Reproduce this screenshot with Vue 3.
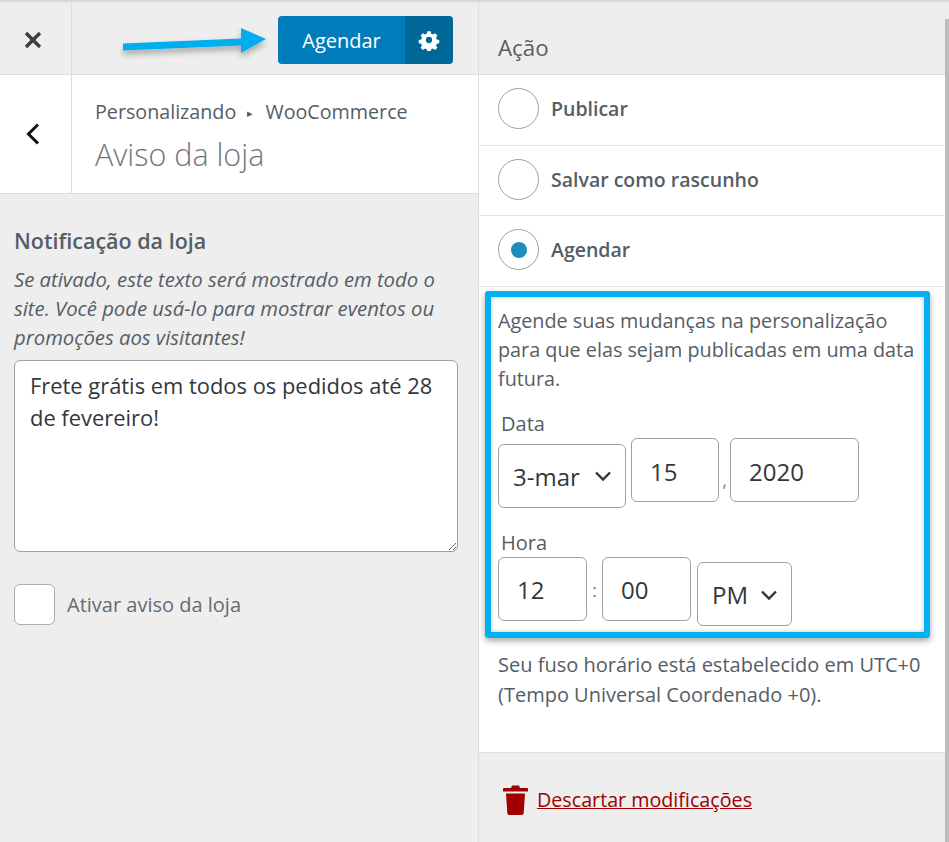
<script setup>
const actions = [
  { label: 'Publicar', checked: false },
  { label: 'Salvar como rascunho', checked: false },
  { label: 'Agendar', checked: true },
]
</script>

<template>
  <div class="page">
    <section class="left">
      <header class="topbar">
        <div class="close">
          <svg width="18" height="18" viewBox="0 0 18 18"><path d="M2 2 16 16M16 2 2 16" stroke="#3a3f45" stroke-width="3.4" fill="none"/></svg>
        </div>
        <div class="publish">
          <span class="publish-main">Agendar</span>
          <span class="publish-gear">
            <svg width="22" height="22" viewBox="0 0 24 24"><path fill="#fff" fill-rule="evenodd" d="M10 1.500h4l.6 3a8 8 0 0 1 2.200.9l2.600-1.700 2.800 2.800-1.700 2.600c.4.7.7 1.400.9 2.200l3 .6v4l-3 .6a8 8 0 0 1-.9 2.200l1.700 2.600-2.800 2.800-2.600-1.700a8 8 0 0 1-2.200.9l-.6 3h-4l-.6-3a8 8 0 0 1-2.200-.9l-2.600 1.700-2.800-2.800 1.700-2.600a8 8 0 0 1-.9-2.200l-3-.6v-4l3-.6c.2-.8.5-1.500.9-2.200L1.800 6.500l2.800-2.800 2.600 1.700a8 8 0 0 1 2.200-.9zM12 8.200a3.800 3.800 0 1 0 0 7.600 3.800 3.800 0 0 0 0-7.600z" transform="translate(1.200 1.200) scale(.9)"/></svg>
          </span>
        </div>
      </header>

      <div class="crumbs">
        <div class="back">
          <svg width="16" height="24" viewBox="0 0 16 24"><path d="M13 2.500 3.500 12 13 21.500" stroke="#111" stroke-width="3" fill="none"/></svg>
        </div>
        <div class="crumb-text">
          <div class="crumb-path">Personalizando <span class="crumb-sep">▸</span> WooCommerce</div>
          <div class="crumb-title">Aviso da loja</div>
        </div>
      </div>

      <div class="form">
        <h3 class="form-title">Notificação da loja</h3>
        <p class="form-help">Se ativado, este texto será mostrado em todo o site. Você pode usá-lo para mostrar eventos ou promoções aos visitantes!</p>
        <textarea class="notice" readonly>Frete grátis em todos os pedidos até 28 de fevereiro!</textarea>
        <label class="check">
          <span class="check-box"></span>
          <span>Ativar aviso da loja</span>
        </label>
      </div>
    </section>

    <section class="right">
      <div class="action-head">Ação</div>
      <div v-for="a in actions" :key="a.label" class="action-row">
        <span class="radio"><span v-if="a.checked" class="radio-dot"></span></span>
        <span class="action-label">{{ a.label }}</span>
      </div>

      <div class="schedule">
        <p class="schedule-text">Agende suas mudanças na personalização para que elas sejam publicadas em uma data futura.</p>
        <div class="field-label date-label">Data</div>
        <div class="fields">
          <div class="select month"><span>3-mar</span><svg width="18" height="12" viewBox="0 0 18 12"><path d="M2 2.500 9 9.500 16 2.500" stroke="#32373c" stroke-width="2.400" fill="none"/></svg></div>
          <div class="input day">15</div>
          <span class="sep comma">,</span>
          <div class="input year">2020</div>
        </div>
        <div class="field-label time-label">Hora</div>
        <div class="fields">
          <div class="input hour">12</div>
          <span class="sep colon">:</span>
          <div class="input minute">00</div>
          <div class="select ampm"><span>PM</span><svg width="18" height="12" viewBox="0 0 18 12"><path d="M2 2.500 9 9.500 16 2.500" stroke="#32373c" stroke-width="2.400" fill="none"/></svg></div>
        </div>
      </div>

      <p class="timezone">Seu fuso horário está estabelecido em UTC+0 (Tempo Universal Coordenado +0).</p>

      <footer class="discard">
        <svg width="25" height="30" viewBox="0 0 25 30"><path fill="#a00000" d="M9 0.500h7l1 2.500h7a1 1 0 0 1 1 1v2.500H0V4a1 1 0 0 1 1-1h7zM3 8.500h19l-1.300 19.500a2 2 0 0 1-2 1.900H6.300a2 2 0 0 1-2-1.900z"/></svg>
        <a class="discard-link">Descartar modificações</a>
      </footer>
    </section>

    <div class="scrollbar"></div>

    <svg class="arrow" width="160" height="50" viewBox="0 0 160 50">
      <defs>
        <filter id="arrow-shadow" x="-10%" y="-40%" width="120%" height="200%">
          <feDropShadow dx="0" dy="4" stdDeviation="3" flood-color="#000" flood-opacity=".3"/>
        </filter>
      </defs>
      <path fill="#00aeef" filter="url(#arrow-shadow)" d="M3 15.500 121 10.500V0L146 11 121 25V17.500L3 22.500z"/>
    </svg>
  </div>
</template>

<style>
html, body { margin: 0; background: #eee; }
</style>

<style scoped>
.page {
  position: relative;
  display: flex;
  width: 949px;
  height: 842px;
  overflow: hidden;
  box-sizing: border-box;
  border-top: 2px solid #d8d8d8;
  background: #eeeeee;
  color: #555d66;
  font-family: "Open Sans", "Noto Sans", sans-serif;
  font-size: 20px;
}
.left {
  width: 479px;
  flex: none;
  box-sizing: border-box;
  border-right: 1px solid #dddddd;
}
.topbar {
  display: flex;
  height: 72px;
  border-bottom: 1px solid #dddddd;
}
.close {
  width: 72px;
  box-sizing: border-box;
  border-right: 1px solid #dddddd;
  display: flex;
  align-items: center;
  justify-content: center;
  padding: 4px 5px 0 0;
}
.publish {
  display: flex;
  height: 48px;
  margin: 14px 0 0 206px;
  border-radius: 4px;
  overflow: hidden;
  color: #fff;
}
.publish-main {
  width: 127px;
  background: #007cba;
  display: flex;
  align-items: center;
  justify-content: center;
  font-size: 20px;
}
.publish-gear {
  width: 48px;
  background: #006799;
  display: flex;
  align-items: center;
  justify-content: center;
}
.crumbs {
  display: flex;
  height: 118px;
  background: #fff;
  border-bottom: 1px solid #dddddd;
}
.back {
  width: 72px;
  box-sizing: border-box;
  border-right: 1px solid #dddddd;
  display: flex;
  align-items: center;
  justify-content: center;
  padding-right: 6px;
}
.crumb-text {
  padding: 22px 0 0 23px;
}
.crumb-path {
  font-size: 19.700px;
  line-height: 30px;
  color: #555d66;
  white-space: nowrap;
}
.crumb-sep {
  font-size: 11px;
  position: relative;
  top: -2px;
  margin: 0 7px 0 6px;
}
.crumb-title {
  font-size: 30.500px;
  line-height: 38px;
  margin-top: 5px;
  font-weight: 300;
  color: #6f767d;
}
.form {
  padding: 33px 0 0 14px;
}
.form-title {
  margin: 0;
  font-size: 21.500px;
  line-height: 28px;
  font-weight: 600;
  color: #555d66;
}
.form-help {
  margin: 10px 0 0;
  width: 444px;
  font-size: 20.300px;
  line-height: 29px;
  font-style: italic;
  color: #555d66;
}
.notice {
  display: block;
  box-sizing: border-box;
  width: 444px;
  height: 192px;
  margin-top: 8px;
  padding: 9px 15px;
  border: 1.500px solid #9aa1a8;
  border-radius: 6px;
  background: #fff;
  color: #32373c;
  font-family: inherit;
  font-size: 21.900px;
  line-height: 32px;
  outline: none;
}
.check {
  display: flex;
  align-items: center;
  gap: 12px;
  margin-top: 32px;
  font-size: 20px;
  color: #646b72;
}
.check-box {
  width: 41px;
  height: 41px;
  box-sizing: border-box;
  border: 1.500px solid #a8aeb4;
  border-radius: 6px;
  background: #fff;
}
.right {
  flex: 1;
  background: #fff;
  display: flex;
  flex-direction: column;
}
.scrollbar {
  flex: none;
  width: 4px;
  margin-top: 17px;
  background: #bcbcbc;
}
.action-head {
  height: 73px;
  box-sizing: border-box;
  padding: 30px 0 0 19px;
  background: #eeeeee;
  border-bottom: 1px solid #dddddd;
  font-size: 22.300px;
  line-height: 32px;
}
.action-row {
  display: flex;
  align-items: center;
  gap: 12px;
  height: 70.500px;
  box-sizing: border-box;
  padding: 0 0 2px 19px;
  border-bottom: 1.500px solid #e4e4e4;
}
.radio {
  width: 41px;
  height: 41px;
  box-sizing: border-box;
  border: 1.500px solid #9aa1a8;
  border-radius: 50%;
  display: flex;
  align-items: center;
  justify-content: center;
}
.radio-dot {
  width: 16px;
  height: 16px;
  border-radius: 50%;
  background: #1e8cbe;
}
.action-label {
  font-size: 19.500px;
  font-weight: 600;
}
.schedule {
  box-sizing: border-box;
  width: 445px;
  height: 347px;
  margin: 4.500px 0 0 6px;
  padding: 9px 0 0 7px;
  border: 6px solid #00b0f0;
  border-radius: 3px;
  box-shadow: 0 3px 6px rgba(0, 0, 0, .35), inset 0 0 4px rgba(0, 0, 0, .25);
}
.schedule-text {
  margin: 0;
  width: 425px;
  font-size: 19.800px;
  line-height: 29px;
}
.field-label {
  padding-left: 3px;
  font-size: 20px;
  line-height: 26px;
}
.date-label { margin-top: 18px; }
.time-label { margin-top: 22px; }
.fields {
  display: flex;
  align-items: flex-start;
  color: #32373c;
  font-size: 24px;
}
.date-label + .fields { margin-top: 1px; }
.time-label + .fields { margin-top: 1px; }
.input, .select {
  box-sizing: border-box;
  height: 64px;
  border: 1.500px solid #9aa1a8;
  border-radius: 6px;
  background: #fff;
  display: flex;
  align-items: center;
}
.input { padding-left: 18px; padding-top: 2px; }
.select {
  margin-top: 5.500px;
  justify-content: space-between;
  padding: 1px 13px 0 14px;
}
.month { width: 128px; margin-right: 5px; }
.day { width: 88px; }
.year { width: 129px; }
.hour { width: 89px; }
.minute { width: 89px; }
.ampm { width: 95px; margin-left: 6px; padding-left: 14px; }
.sep {
  color: #7b8289;
  font-size: 18px;
  text-align: center;
}
.comma { width: 11px; margin-top: 30px; }
.colon { width: 15px; margin-top: 21px; }
.timezone {
  margin: 11.500px 0 0 19px;
  width: 436px;
  font-size: 20px;
  line-height: 30px;
}
.discard {
  margin-top: auto;
  height: 90.500px;
  box-sizing: border-box;
  background: #eeeeee;
  border-top: 1.500px solid #dddddd;
  display: flex;
  align-items: center;
  gap: 9px;
  padding: 5px 0 0 24px;
}
.discard-link {
  color: #a00000;
  font-size: 19.700px;
  text-decoration: underline;
}
.arrow {
  position: absolute;
  left: 120px;
  top: 26px;
}
</style>
